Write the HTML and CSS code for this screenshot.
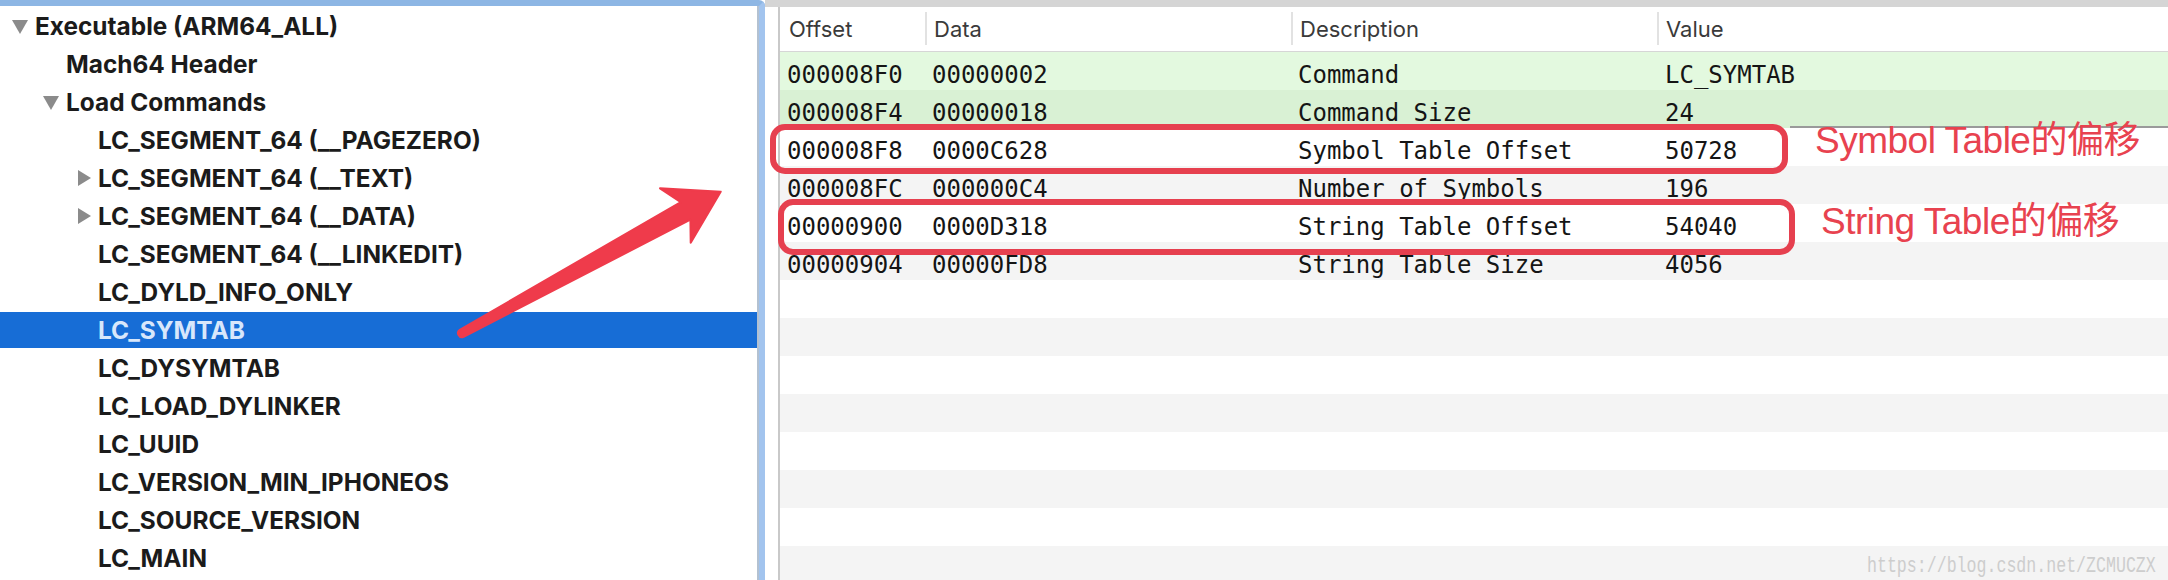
FILE: index.html
```html
<!DOCTYPE html>
<html>
<head>
<meta charset="utf-8">
<link rel="stylesheet" href="styles.css">
</head>
<body>
<div class="app">
  <aside class="tree">
    <div class="tree-inner">
      <div class="node l0"><span class="disc"><i class="tri-down"></i></span><span class="label">Executable (ARM64_ALL)</span></div>
      <div class="node l1"><span class="disc"></span><span class="label">Mach64 Header</span></div>
      <div class="node l1"><span class="disc"><i class="tri-down"></i></span><span class="label">Load Commands</span></div>
      <div class="node l2"><span class="disc"></span><span class="label">LC_SEGMENT_64 (__PAGEZERO)</span></div>
      <div class="node l2"><span class="disc"><i class="tri-right"></i></span><span class="label">LC_SEGMENT_64 (__TEXT)</span></div>
      <div class="node l2"><span class="disc"><i class="tri-right"></i></span><span class="label">LC_SEGMENT_64 (__DATA)</span></div>
      <div class="node l2"><span class="disc"></span><span class="label">LC_SEGMENT_64 (__LINKEDIT)</span></div>
      <div class="node l2"><span class="disc"></span><span class="label">LC_DYLD_INFO_ONLY</span></div>
      <div class="node l2 selected"><span class="disc"></span><span class="label">LC_SYMTAB</span></div>
      <div class="node l2"><span class="disc"></span><span class="label">LC_DYSYMTAB</span></div>
      <div class="node l2"><span class="disc"></span><span class="label">LC_LOAD_DYLINKER</span></div>
      <div class="node l2"><span class="disc"></span><span class="label">LC_UUID</span></div>
      <div class="node l2"><span class="disc"></span><span class="label">LC_VERSION_MIN_IPHONEOS</span></div>
      <div class="node l2"><span class="disc"></span><span class="label">LC_SOURCE_VERSION</span></div>
      <div class="node l2"><span class="disc"></span><span class="label">LC_MAIN</span></div>
    </div>
  </aside>
  <section class="right">
    <div class="topbar"></div>
    <div class="right-body">
      <div class="gutter"></div>
      <div class="table">
        <div class="thead">
          <div class="th">Offset</div>
          <div class="th sep">Data</div>
          <div class="th sep">Description</div>
          <div class="th sep">Value</div>
        </div>
        <div class="tr green">
          <div class="td">000008F0</div><div class="td">00000002</div><div class="td">Command</div><div class="td val">LC_SYMTAB</div>
        </div>
        <div class="tr green2">
          <div class="td">000008F4</div><div class="td">00000018</div><div class="td">Command Size</div><div class="td val">24</div>
        </div>
        <div class="tr">
          <div class="td">000008F8</div><div class="td">0000C628</div><div class="td">Symbol Table Offset</div><div class="td val">50728</div>
        </div>
        <div class="tr alt">
          <div class="td">000008FC</div><div class="td">000000C4</div><div class="td">Number of Symbols</div><div class="td val">196</div>
        </div>
        <div class="tr">
          <div class="td">00000900</div><div class="td">0000D318</div><div class="td">String Table Offset</div><div class="td val">54040</div>
        </div>
        <div class="tr alt">
          <div class="td">00000904</div><div class="td">00000FD8</div><div class="td">String Table Size</div><div class="td val">4056</div>
        </div>
        <div class="tr"></div>
        <div class="tr alt"></div>
        <div class="tr"></div>
        <div class="tr alt"></div>
        <div class="tr"></div>
        <div class="tr alt"></div>
        <div class="tr"></div>
        <div class="tr alt"></div>
      </div>
    </div>
  </section>
</div>

<svg class="overlay" width="2168" height="580" viewBox="0 0 2168 580" xmlns="http://www.w3.org/2000/svg">
  <line x1="1790" y1="127" x2="2168" y2="127" stroke="#9a9a9a" stroke-width="2"/>
  <rect x="773" y="127" width="1012" height="44" rx="12" ry="12" fill="none" stroke="#e6404f" stroke-width="6"/>
  <rect x="781" y="202" width="1011" height="50" rx="12" ry="12" fill="none" stroke="#e6404f" stroke-width="6"/>
  <path d="M720.7 191.7 L660 188.3 L680.8 202.1 L459.8 329.8 A4 4 0 0 0 463.6 336.8 L690.4 219.7 L690.7 242.7 Z" fill="#ef3b4b" stroke="#ef3b4b" stroke-width="2" stroke-linejoin="round"/>
</svg>
<div class="note note-symbol">Symbol Table的偏移</div>
<div class="note note-string">String Table的偏移</div>
<div class="watermark">https://blog.csdn.net/ZCMUCZX</div>
</body>
</html>
```

FILE: styles.css
```css
html, body {
  margin: 0;
  padding: 0;
  background: #ffffff;
}
body {
  width: 2168px;
  height: 580px;
  overflow: hidden;
  position: relative;
}
.app {
  display: flex;
  height: 580px;
}
.tree {
  width: 765px;
  flex: none;
  box-sizing: border-box;
  border-top: 6px solid #8db6e4;
  border-right: 6px solid #a2c4ee;
  border-top-right-radius: 6px;
  background: #ffffff;
}
.tree-inner {
  height: 100%;
  box-sizing: border-box;
  border-right: 2px solid #b3c1d1;
  padding-top: 2px;
  display: flex;
  flex-direction: column;
  gap: 2px;
  overflow: hidden;
}
.node {
  height: 36px;
  flex: none;
  display: flex;
  align-items: center;
  font-family: Inter, "Liberation Sans", sans-serif;
  font-weight: 700;
  font-size: 24.4px;
  color: #1b1b1b;
  white-space: nowrap;
}
.node.l0 { padding-left: 12px; }
.node.l1 { padding-left: 43px; }
.node.l2 { padding-left: 75px; }
.disc {
  width: 23px;
  flex: none;
  display: flex;
  align-items: center;
}
.tri-down {
  display: block;
  width: 0;
  height: 0;
  border-left: 8.5px solid transparent;
  border-right: 8.5px solid transparent;
  border-top: 14px solid #8b8b8b;
  margin-top: 1px;
}
.tri-right {
  display: block;
  width: 0;
  height: 0;
  margin-left: 3px;
  border-top: 8px solid transparent;
  border-bottom: 8px solid transparent;
  border-left: 13px solid #8b8b8b;
}
.node.selected {
  background: #176dd6;
  color: #d8e7fb;
}
.right {
  flex: 1;
  display: flex;
  flex-direction: column;
  min-width: 0;
}
.topbar {
  height: 7px;
  flex: none;
  background: #d5d5d5;
}
.right-body {
  flex: 1;
  display: flex;
  min-height: 0;
}
.gutter {
  width: 13px;
  flex: none;
  background: #ffffff;
}
.table {
  flex: 1;
  border-left: 2px solid #c9c9c9;
  overflow: hidden;
}
.thead {
  height: 44px;
  display: grid;
  grid-template-columns: 145px 366px 366px 1fr;
  border-bottom: 1px solid #d6d6d6;
  background: #ffffff;
}
.th {
  position: relative;
  display: flex;
  align-items: center;
  padding-left: 9px;
  font-family: Inter, "Liberation Sans", sans-serif;
  font-size: 22px;
  color: #3a3a3a;
}
.th.sep::before {
  content: "";
  position: absolute;
  left: 0;
  top: 5px;
  bottom: 6px;
  width: 2px;
  background: #e2e2e2;
}
.tr {
  height: 38px;
  box-sizing: border-box;
  display: grid;
  grid-template-columns: 145px 366px 366px 1fr;
  background: #ffffff;
  padding-top: 8px;
}
.tr.alt { background: #f4f4f4; }
.tr.green { background: #e3f9df; }
.tr.green2 { background: #d9f1d4; }
.td {
  padding-left: 7px;
  font-family: "DejaVu Sans Mono", "Liberation Mono", monospace;
  font-size: 24px;
  line-height: 30px;
  color: #151515;
  white-space: nowrap;
}
.td.val { padding-left: 8px; }
.overlay {
  position: absolute;
  left: 0;
  top: 0;
  pointer-events: none;
}
.note {
  position: absolute;
  font-family: "Liberation Sans", "Noto Sans CJK SC", sans-serif;
  font-size: 37px;
  line-height: 38px;
  color: #e8424f;
  white-space: nowrap;
  letter-spacing: -0.5px;
}
.note-symbol { left: 1815px; top: 122px; }
.note-string { left: 1821px; top: 203px; }
.watermark {
  position: absolute;
  left: 1867px;
  top: 554px;
  font-family: "Liberation Mono", monospace;
  font-size: 16.6px;
  line-height: 20px;
  color: #cdcdcd;
  transform: scaleY(1.3);
  transform-origin: left top;
  white-space: nowrap;
}
```
